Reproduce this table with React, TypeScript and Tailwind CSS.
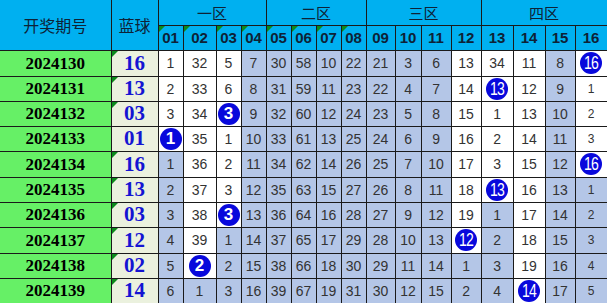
const widths = [111, 47, 25, 33, 25, 25, 25, 25, 25, 25, 29, 26, 30, 30, 32, 32, 30, 32];

type Cell = { v: number; s?: boolean; c?: boolean };

// w = white, s = shaded, C = hit (blue ball)
const raw = [
    "1w 32w 5w 7s 30s 58s 10s 22s 21s 3s 6s 13w 34w 11w 8s C16",
    "2w 33w 6w 8s 31s 59s 11s 23s 22s 4s 7s 14w C13 12w 9s 1w",
    "3w 34w C3 9s 32s 60s 12s 24s 23s 5s 8s 15w 1w 13w 10s 2w",
    "C1 35w 1w 10s 33s 61s 13s 25s 24s 6s 9s 16w 2w 14w 11s 3w",
    "1s 36w 2w 11s 34s 62s 14s 26s 25s 7s 10s 17w 3w 15w 12s C16",
    "2s 37w 3w 12s 35s 63s 15s 27s 26s 8s 11s 18w C13 16w 13s 1s",
    "3s 38w C3 13s 36s 64s 16s 28s 27s 9s 12s 19w 1s 17w 14s 2s",
    "4s 39w 1s 14s 37s 65s 17s 29s 28s 10s 13s C12 2s 18w 15s 3s",
    "5s C2 2s 15s 38s 66s 18s 30s 29s 11s 14s 1s 3s 19w 16s 4s",
    "6s 1s 3s 16s 39s 67s 19s 31s 30s 12s 15s 2s 4s C14 17s 5s",
];

const rows = [
    { id: "2024130", blue: "16", h: "h-[26px]", tri: true },
    { id: "2024131", blue: "13", h: "h-[25px]", tri: true },
    { id: "2024132", blue: "03", h: "h-[25px]", tri: true },
    { id: "2024133", blue: "01", h: "h-[25px]", tri: false },
    { id: "2024134", blue: "16", h: "h-[26px]", tri: true },
    { id: "2024135", blue: "13", h: "h-[25px]", tri: true },
    { id: "2024136", blue: "03", h: "h-[25px]", tri: true },
    { id: "2024137", blue: "12", h: "h-[26px]", tri: true },
    { id: "2024138", blue: "02", h: "h-[25px]", tri: true },
    { id: "2024139", blue: "14", h: "h-[25px]", tri: true },
];

const parse = (line: string): Cell[] =>
    line.split(" ").map((t) => {
        if (t.startsWith("C")) return { v: Number(t.slice(1)), c: true };
        return { v: Number(t.slice(0, -1)), s: t.endsWith("s") };
    });

const Tri = () => (
    <span className="absolute left-0 top-0 h-0 w-0 border-r-[6px] border-t-[6px] border-r-transparent border-t-[#0c8a1c]" />
);

const Ball = ({ n }: { n: number }) => (
    <span className="mx-auto flex h-[22px] w-[22px] items-center justify-center rounded-full bg-[#0808dc] text-white">
        {n < 10 ? (
            <span className="text-[17px] font-bold leading-none">{n}</span>
        ) : (
            <span className="inline-block scale-x-[0.78] text-[18px] leading-none tracking-[-1px]">{n}</span>
        )}
    </span>
);

const zones = ["一区", "二区", "三区", "四区"];

export default function App() {
    return (
        <div className="h-[303px] w-[607px] overflow-hidden bg-white leading-none font-['Liberation_Sans',sans-serif]">
            <table className="w-[607px] table-fixed border-collapse leading-none">
                <colgroup>
                    {widths.map((w, i) => (
                        <col key={i} style={{ width: w }} />
                    ))}
                </colgroup>
                <thead>
                    <tr className="h-[25px]">
                        <th
                            rowSpan={2}
                            className="border-b border-r border-[#1a1a1a] bg-[#00b0f0] p-0 text-[16px] font-normal leading-none text-[#0e2236] font-['Noto_Sans_CJK_SC',sans-serif]"
                        >
                            开奖期号
                        </th>
                        <th
                            rowSpan={2}
                            className="border-b border-r border-[#1a1a1a] bg-[#00b0f0] p-0 text-[16px] font-normal leading-none text-[#0e2236] font-['Noto_Sans_CJK_SC',sans-serif]"
                        >
                            蓝球
                        </th>
                        {zones.map((z) => (
                            <th
                                key={z}
                                colSpan={4}
                                className="border-b border-r border-[#1a1a1a] bg-[#00b0f0] p-0 text-[15px] font-normal leading-none text-[#0e2236] font-['Noto_Sans_CJK_SC',sans-serif]"
                            >
                                {z}
                            </th>
                        ))}
                    </tr>
                    <tr className="h-[25px]">
                        {Array.from({ length: 16 }, (_, i) => (
                            <th
                                key={i}
                                className="relative border-b border-r border-[#1a1a1a] bg-[#00b0f0] p-0 text-[15px] font-bold leading-none text-[#0e2236]"
                            >
                                {i < 8 && <Tri />}
                                {String(i + 1).padStart(2, "0")}
                            </th>
                        ))}
                    </tr>
                </thead>
                <tbody>
                    {rows.map((r, ri) => (
                        <tr key={r.id} className={r.h}>
                            <td className="border-b border-r border-[#1a1a1a] bg-[#66f066] p-0 text-center text-[17px] font-bold leading-none text-black font-['Liberation_Serif',serif]">
                                {r.id}
                            </td>
                            <td className="relative border-b border-r border-[#1a1a1a] bg-[#ebf1de] p-0 text-center text-[21px] font-bold leading-none text-[#1414d2] font-['Liberation_Serif',serif]">
                                {r.tri && <Tri />}
                                {r.blue}
                            </td>
                            {parse(raw[ri]).map((c, ci) => (
                                <td
                                    key={ci}
                                    className={`border-b border-r border-[#1a1a1a] p-0 text-center leading-none text-[#333] ${c.s ? "bg-[#b4c6e7]" : "bg-white"
                                        } ${ci === 15 ? "text-[12px]" : "text-[14px]"}`}
                                >
                                    {c.c ? <Ball n={c.v} /> : c.v}
                                </td>
                            ))}
                        </tr>
                    ))}
                </tbody>
            </table>
        </div>
    );
}
